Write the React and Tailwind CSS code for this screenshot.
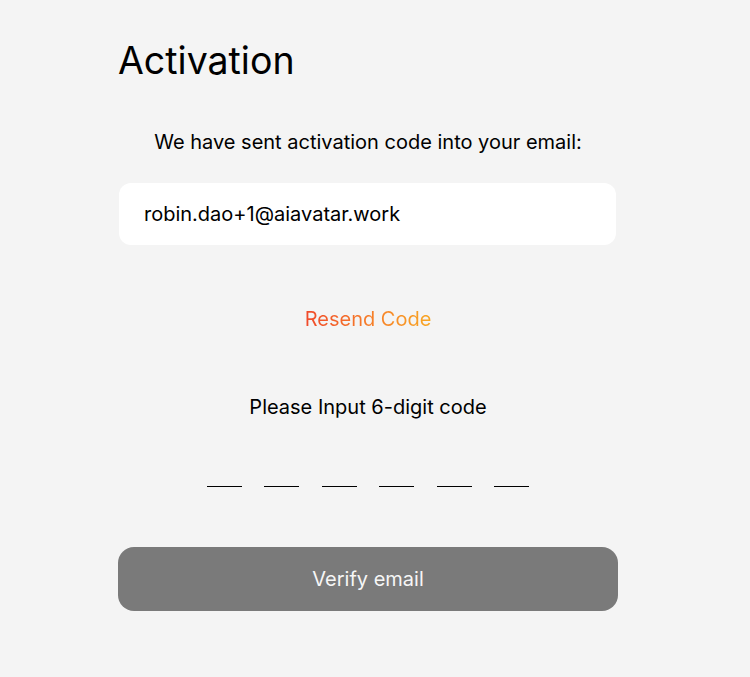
import { useState } from 'react';

const DIGITS = 6;

export default function App() {
  const [email] = useState('robin.dao+1@aiavatar.work');
  const [code, setCode] = useState(Array(DIGITS).fill(''));

  const handleDigit = (i, v) =>
    setCode((prev) => prev.map((d, idx) => (idx === i ? v.slice(-1) : d)));

  return (
    <div
      className="min-h-[677px] w-full bg-[#f4f4f4] text-black"
      style={{ fontFamily: 'Inter, "Noto Sans", sans-serif' }}
    >
      <div className="ml-[118px] w-[500px] pt-[37px]">
        <h1 className="text-[37.5px] leading-[48px] font-normal">Activation</h1>

        <p className="mt-[43px] text-center text-[20px] leading-7">
          We have sent activation code into your email:
        </p>

        <div className="mt-[27px] ml-px w-[497px] h-[62px] bg-white rounded-xl flex items-center px-[25px] text-[20px]">
          {email}
        </div>

        <div className="mt-[60px] flex justify-center">
          <button className="text-[20px] leading-7 bg-gradient-to-r from-[#f0492b] to-[#f8a623] bg-clip-text text-transparent">
            Resend Code
          </button>
        </div>

        <p className="mt-[60px] text-center text-[20px] leading-7">
          Please Input 6-digit code
        </p>

        {/* code inputs */}
        <div className="mt-[42px] flex justify-center gap-[22.6px]">
          {code.map((d, i) => (
            <input
              key={i}
              value={d}
              onChange={(e) => handleDigit(i, e.target.value)}
              className="w-[35px] h-[24px] bg-transparent border-b border-black text-center text-[18px] outline-none"
            />
          ))}
        </div>

        <button className="mt-[60px] w-[500px] h-[64px] rounded-2xl bg-[#7a7a7a] text-[#f6f6f6] text-[20px]">
          Verify email
        </button>
      </div>
    </div>
  );
}
